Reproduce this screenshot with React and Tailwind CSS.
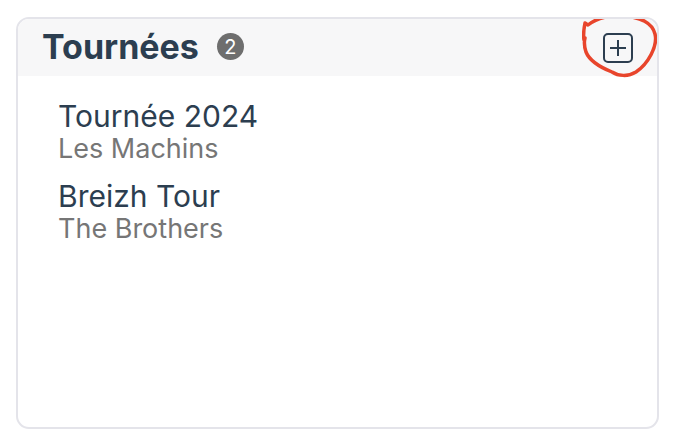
import React from "react";

const tours = [
  { name: "Tournée 2024", band: "Les Machins" },
  { name: "Breizh Tour", band: "The Brothers" },
];

export default function App() {
  return (
    <div className="w-[682px] h-[444px] bg-white pt-[17px] pl-[16px] font-['Inter',sans-serif]">
      <div className="w-[643px] h-[412px] rounded-[13px] border-2 border-[#e4e4ea] overflow-hidden">
        <div className="h-[57px] bg-[#f7f7f8] flex items-center justify-between pl-[24px] pr-[24px]">
          <div className="flex items-center gap-[18px] -mt-[2px]">
            <h2 className="text-[34px] leading-[40px] font-bold text-[#2c3e50]">Tournées</h2>
            <span className="w-[27px] h-[27px] rounded-full bg-[#6e6e6e] text-white text-[20px] flex items-center justify-center">
              2
            </span>
          </div>
          <div className="relative">
            <svg width="30" height="30" viewBox="0 0 30 30" fill="none" stroke="#2c3e50" strokeWidth="2">
              <rect x="1" y="1" width="28" height="28" rx="4" />
              <path d="M15 7v16M7 15h16" />
            </svg>
            <svg
              className="absolute -left-[21px] -top-[19px]"
              width="76"
              height="66"
              viewBox="0 0 76 66"
              fill="none"
              stroke="#e8452c"
              strokeWidth="3.5"
              strokeLinecap="round"
              strokeLinejoin="round"
            >
              <path d="M2 26 C1 20 2 14 3 9 L6 11 C16 3 30 1 44 2 C58 4 70 8 73 20 C76 32 66 50 54 58 C46 63 36 62 30 58 C20 54 8 48 4 38 C2 32 2 28 3 24" />
            </svg>
          </div>
        </div>
        <div className="pl-[40px] pt-[23px] flex flex-col gap-[15px]">
          {tours.map((t) => (
            <div key={t.name} className="flex flex-col">
              <span className="text-[30px] leading-[34px] text-[#2c3e50]">{t.name}</span>
              <span className="text-[27px] leading-[31px] text-[#767676]">{t.band}</span>
            </div>
          ))}
        </div>
      </div>
    </div>
  );
}
